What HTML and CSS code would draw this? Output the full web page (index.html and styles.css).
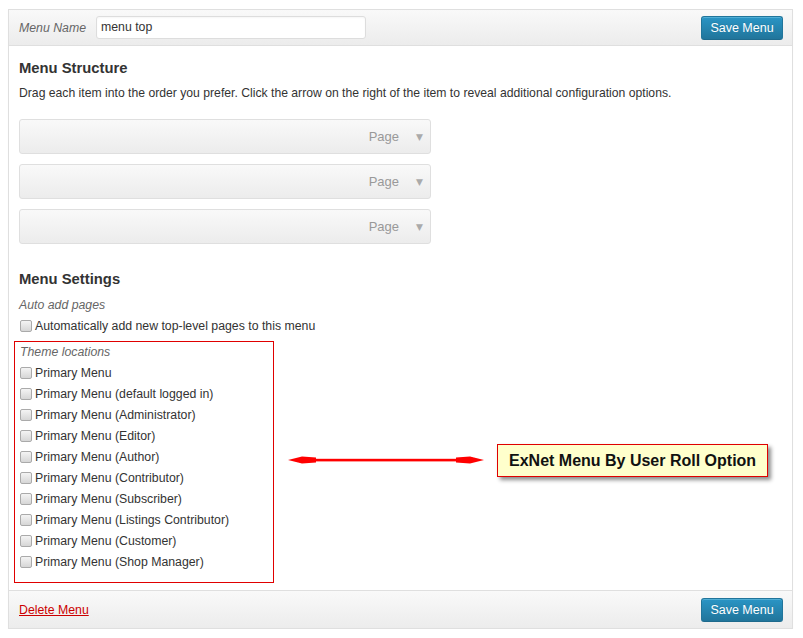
FILE: index.html
```html
<!DOCTYPE html>
<html>
<head>
<meta charset="utf-8">
<link rel="stylesheet" href="styles.css">
</head>
<body>
<div class="frame">
  <div class="bar bar-top">
    <label class="name-label">Menu Name</label>
    <div class="name-input">menu top</div>
    <span class="spacer"></span>
    <button class="btn">Save Menu</button>
  </div>
  <div class="content">
    <h3 class="heading">Menu Structure</h3>
    <p class="desc">Drag each item into the order you prefer. Click the arrow on the right of the item to reveal additional configuration options.</p>
    <div class="items">
      <div class="item"><span class="item-type">Page</span><span class="item-arrow">&#9660;</span></div>
      <div class="item"><span class="item-type">Page</span><span class="item-arrow">&#9660;</span></div>
      <div class="item"><span class="item-type">Page</span><span class="item-arrow">&#9660;</span></div>
    </div>
    <h3 class="heading heading-settings">Menu Settings</h3>
    <div class="group-title">Auto add pages</div>
    <div class="row"><span class="cb"></span>Automatically add new top-level pages to this menu</div>
    <div class="locations">
      <div class="group-title">Theme locations</div>
      <div class="row"><span class="cb"></span>Primary Menu</div>
      <div class="row"><span class="cb"></span>Primary Menu (default logged in)</div>
      <div class="row"><span class="cb"></span>Primary Menu (Administrator)</div>
      <div class="row"><span class="cb"></span>Primary Menu (Editor)</div>
      <div class="row"><span class="cb"></span>Primary Menu (Author)</div>
      <div class="row"><span class="cb"></span>Primary Menu (Contributor)</div>
      <div class="row"><span class="cb"></span>Primary Menu (Subscriber)</div>
      <div class="row"><span class="cb"></span>Primary Menu (Listings Contributor)</div>
      <div class="row"><span class="cb"></span>Primary Menu (Customer)</div>
      <div class="row"><span class="cb"></span>Primary Menu (Shop Manager)</div>
    </div>
  </div>
  <div class="bar bar-bottom">
    <a class="delete" href="#">Delete Menu</a>
    <span class="spacer"></span>
    <button class="btn">Save Menu</button>
  </div>
</div>

<svg class="annot-arrow" width="200" height="14" viewBox="0 0 200 14">
  <polygon points="0,7 14,3.5 28,4.5 28,9.5 14,10.5" fill="#ff0000"/>
  <polygon points="196,7 182,3.5 168,4.5 168,9.5 182,10.5" fill="#ff0000"/>
  <rect x="20" y="5.8" width="160" height="2.6" fill="#ff0000"/>
</svg>
<div class="callout">ExNet Menu By User Roll Option</div>
</body>
</html>
```

FILE: styles.css
```css
html, body {
  margin: 0;
  padding: 0;
  background: #ffffff;
}
body {
  padding: 9px 10px 0 8px;
  font-family: "Liberation Sans", Arial, sans-serif;
  font-size: 12.3px;
  color: #333333;
  position: relative;
  height: 629px;
  box-sizing: border-box;
}
.frame {
  width: 785px;
  border: 1px solid #dfdfdf;
  box-sizing: border-box;
  box-shadow: 0 1px 1px rgba(0,0,0,0.04);
}
.bar {
  display: flex;
  align-items: center;
  height: 35px;
  padding: 0 9px 0 10px;
  background: linear-gradient(to bottom, #f9f9f9, #ececec);
}
.bar-top {
  border-bottom: 1px solid #dfdfdf;
}
.bar-bottom {
  height: 37px;
  border-top: 1px solid #dfdfdf;
}
.spacer {
  flex: 1;
}
.name-label {
  font-style: italic;
  color: #666666;
  margin-right: 10px;
}
.name-input {
  width: 270px;
  height: 23px;
  box-sizing: border-box;
  border: 1px solid #dddddd;
  border-radius: 3px;
  background: #ffffff;
  padding: 0 4px;
  line-height: 21px;
  color: #333333;
  box-shadow: inset 0 1px 2px rgba(0,0,0,0.04);
}
.btn {
  font-family: "Liberation Sans", Arial, sans-serif;
  font-size: 12.5px;
  color: #ffffff;
  height: 24px;
  width: 82px;
  padding: 0;
  border: 1px solid #21759b;
  border-bottom-color: #1e6a8d;
  border-radius: 3px;
  background: linear-gradient(to bottom, #2a95c5, #21759b);
  box-shadow: inset 0 1px 0 rgba(120,200,230,0.5);
  text-shadow: 0 -1px 0 rgba(0,0,0,0.1);
}
.content {
  padding: 13px 10px 7px 10px;
}
.heading {
  margin: 0;
  font-size: 14.8px;
  line-height: 18px;
  font-weight: bold;
  color: #333333;
}
.desc {
  margin: 8px 0 0 0;
  line-height: 16px;
  font-size: 12.2px;
}
.items {
  margin-top: 18px;
  display: flex;
  flex-direction: column;
  gap: 10px;
}
.item {
  width: 412px;
  height: 35px;
  box-sizing: border-box;
  border: 1px solid #dfdfdf;
  border-radius: 3px;
  background: linear-gradient(to bottom, #f9f9f9, #ececec);
  display: flex;
  align-items: center;
  justify-content: flex-end;
  padding-right: 7px;
}
.item-type {
  color: #999999;
  font-size: 13px;
}
.item-arrow {
  color: #aaaaaa;
  font-size: 9px;
  margin-left: 17px;
  font-family: "DejaVu Sans", sans-serif;
}
.heading-settings {
  margin-top: 26px;
}
.group-title {
  font-style: italic;
  color: #666666;
  line-height: 16px;
  margin-top: 9px;
}
.row {
  display: flex;
  align-items: center;
  height: 21px;
  line-height: 21px;
}
.group-title + .row {
  margin-top: 3px;
}
.cb {
  display: inline-block;
  width: 10px;
  height: 10px;
  border: 1px solid #aaaaaa;
  border-radius: 2px;
  background: linear-gradient(to bottom, #f4f4f4, #d6d6d6);
  margin: 0 3px 0 1px;
  position: relative;
  top: -1px;
}
.locations {
  margin: 4px 0 0 -5px;
  width: 260px;
  box-sizing: border-box;
  border: 1px solid #e00000;
  padding: 2px 0 9px 4px;
}
.locations .group-title {
  margin-top: 0;
  padding-left: 1px;
}
.delete {
  color: #cc0000;
  text-decoration: underline;
}
.annot-arrow {
  position: absolute;
  left: 288px;
  top: 453px;
}
.callout {
  position: absolute;
  left: 497px;
  top: 444px;
  width: 271px;
  height: 33px;
  box-sizing: border-box;
  border: 1px solid #e00000;
  background: #ffffcc;
  box-shadow: 3px 3px 4px rgba(0,0,0,0.45);
  font-family: "Liberation Sans", Arial, sans-serif;
  font-weight: bold;
  font-size: 16px;
  color: #111111;
  line-height: 31px;
  padding-left: 11px;
}
```
